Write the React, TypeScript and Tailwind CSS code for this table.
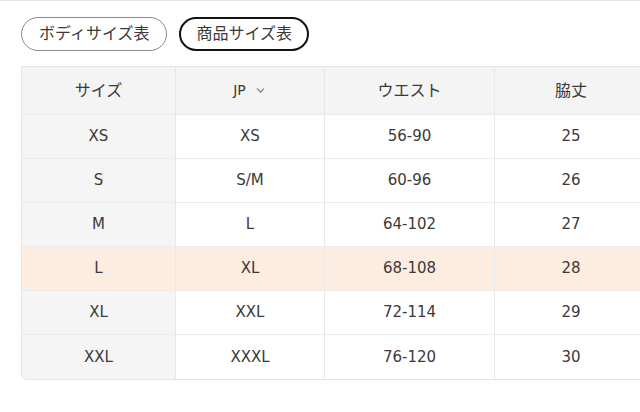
import { ChevronDown } from "lucide-react";

const rows = [
  ["XS", "XS", "56-90", "25"],
  ["S", "S/M", "60-96", "26"],
  ["M", "L", "64-102", "27"],
  ["L", "XL", "68-108", "28"],
  ["XL", "XXL", "72-114", "29"],
  ["XXL", "XXXL", "76-120", "30"],
];

const widths = ["w-[154px]", "w-[149px]", "w-[170px]", "w-[152px]"];

export default function App() {
  return (
    <div
      className="w-[640px] h-[412px] overflow-hidden bg-white text-[#3a3a3a] border-t border-[#e6e6e6]"
      style={{ fontFamily: '"DejaVu Sans", "Noto Sans CJK JP", sans-serif' }}
    >
      <div className="flex gap-3 pl-[21px] pt-4">
        <button className="h-[34px] px-[17px] rounded-full border border-[#8a8a8a] text-[16px]">
          ボディサイズ表
        </button>
        <button className="h-[34px] px-[15px] rounded-full border-2 border-[#111] text-[16px]">
          商品サイズ表
        </button>
      </div>

      <div className="ml-[21px] mt-[15px] w-[640px] border border-[#e4e4e4] rounded-b-md overflow-hidden text-[15px]">
        <div className="flex h-[48px] bg-[#f4f4f4] border-b border-[#e8e8e8] text-[16px]">
          <div className={`${widths[0]} flex items-center justify-center border-r border-[#e8e8e8]`}>サイズ</div>
          <div className={`${widths[1]} flex items-center justify-center gap-2 border-r border-[#e8e8e8] text-[14px]`}>
            JP
            <ChevronDown size={13} strokeWidth={2} className="text-[#777]" />
          </div>
          <div className={`${widths[2]} flex items-center justify-center border-r border-[#e8e8e8]`}>ウエスト</div>
          <div className={`${widths[3]} flex items-center justify-center`}>脇丈</div>
        </div>
        {rows.map((r, i) => {
          const hl = r[0] === "L";
          return (
            <div
              key={r[0]}
              className={`flex h-[44px] ${i < rows.length - 1 ? "border-b border-[#ececec]" : ""} ${hl ? "bg-[#fdede0]" : ""}`}
            >
              <div className={`${widths[0]} flex items-center justify-center border-r border-[#e8e8e8] ${hl ? "" : "bg-[#f5f5f5]"}`}>
                {r[0]}
              </div>
              <div className={`${widths[1]} flex items-center justify-center border-r border-[#e8e8e8]`}>{r[1]}</div>
              <div className={`${widths[2]} flex items-center justify-center border-r border-[#e8e8e8]`}>{r[2]}</div>
              <div className={`${widths[3]} flex items-center justify-center`}>{r[3]}</div>
            </div>
          );
        })}
      </div>
    </div>
  );
}
